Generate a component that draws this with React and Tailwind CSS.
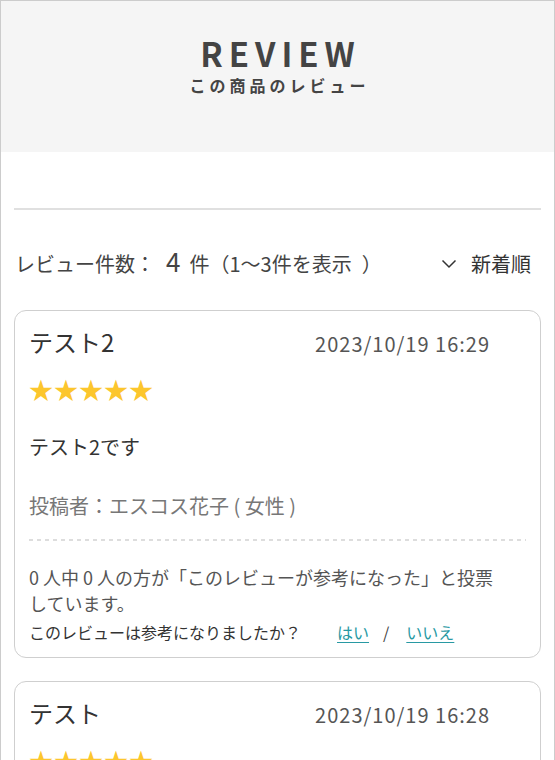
import React from "react";

function Chevron() {
  return (
    <svg width="16" height="10" viewBox="0 0 16 10" fill="none" className="mr-[14px] self-center">
      <polyline points="1.5,1.5 8,8 14.5,1.5" stroke="#333" strokeWidth="1.5" fill="none" />
    </svg>
  );
}

function Stars() {
  return (
    <div className="text-[24px] leading-[30px] tracking-[1px] text-[#fcc62d]">★★★★★</div>
  );
}

function ReviewCard({ title, date, body, author, full }) {
  return (
    <div className="rounded-[12px] border border-[#cfcfcf] px-[14px] pt-[15px] pb-[13px]">
      <div className="flex items-baseline justify-between pr-[36px]">
        <div className="text-[24px] leading-[32px] text-[#333]">{title}</div>
        <div className="text-[20px] leading-[32px] tracking-[1px] text-[#555]">{date}</div>
      </div>
      <div className="mt-[14px]">
        <Stars />
      </div>
      {full && (
        <>
          <div className="mt-[28px] text-[20px] leading-[30px] text-[#333]">{body}</div>
          <div className="mt-[29px] text-[20px] leading-[30px] text-[#777]">{author}</div>
          <div className="mt-[18px] h-[2px] bg-[linear-gradient(to_right,#dddddd_50%,transparent_50%)] bg-[length:8px_2px]" />
          <p className="mt-[23px] pr-6 text-[18px] leading-[26px] text-[#555]">
            0 人中 0 人の方が「このレビューが参考になった」と投票しています。
          </p>
          <div className="mt-[4px] flex items-baseline text-[16px] leading-[24px] text-[#333]">
            <span>このレビューは参考になりましたか？</span>
            <a href="#" className="ml-[36px] text-[#2899a3] underline underline-offset-[3px]">はい</a>
            <span className="ml-[14px] mr-[17px] text-[#444]">/</span>
            <a href="#" className="text-[#2899a3] underline underline-offset-[3px]">いいえ</a>
          </div>
        </>
      )}
    </div>
  );
}

export default function App() {
  return (
    <div className="h-[760px] w-full overflow-hidden border-x border-t border-[#cccccc] bg-white font-['Noto_Sans_CJK_JP','Noto_Sans',sans-serif]">
      <div className="flex h-[151px] flex-col items-center bg-[#f5f5f5] pt-[32px]">
        <div className="pl-[6px] text-[33px] font-bold leading-[40px] tracking-[6px] text-[#444]">REVIEW</div>
        <div className="pl-[0.25em] text-[16px] font-bold leading-[24px] tracking-[0.25em] text-[#444]">この商品のレビュー</div>
      </div>
      <div className="px-[13px]">
        <div className="mt-[56px] h-[2px] bg-[#e0e0e0]" />
        <div className="mt-[35px] flex items-baseline justify-between">
          <div className="flex items-baseline pl-[1px] text-[#444]">
            <span className="text-[20px] leading-[32px]">レビュー件数：</span>
            <span className="ml-[11px] mr-[9px] text-[26px] leading-[32px]">4</span>
            <span className="text-[20px] leading-[32px]">件（1〜3件を表示</span>
            <span className="ml-[10px] text-[20px] leading-[32px]">）</span>
          </div>
          <div className="flex items-baseline pr-[10px] text-[#333]">
            <Chevron />
            <span className="text-[20px] leading-[32px]">新着順</span>
          </div>
        </div>
        <div className="mt-[30px]">
          <ReviewCard
            title="テスト2"
            date="2023/10/19 16:29"
            body="テスト2です"
            author="投稿者：エスコス花子 ( 女性 )"
            full
          />
        </div>
        <div className="mt-[23px]">
          <ReviewCard title="テスト" date="2023/10/19 16:28" />
        </div>
      </div>
    </div>
  );
}
